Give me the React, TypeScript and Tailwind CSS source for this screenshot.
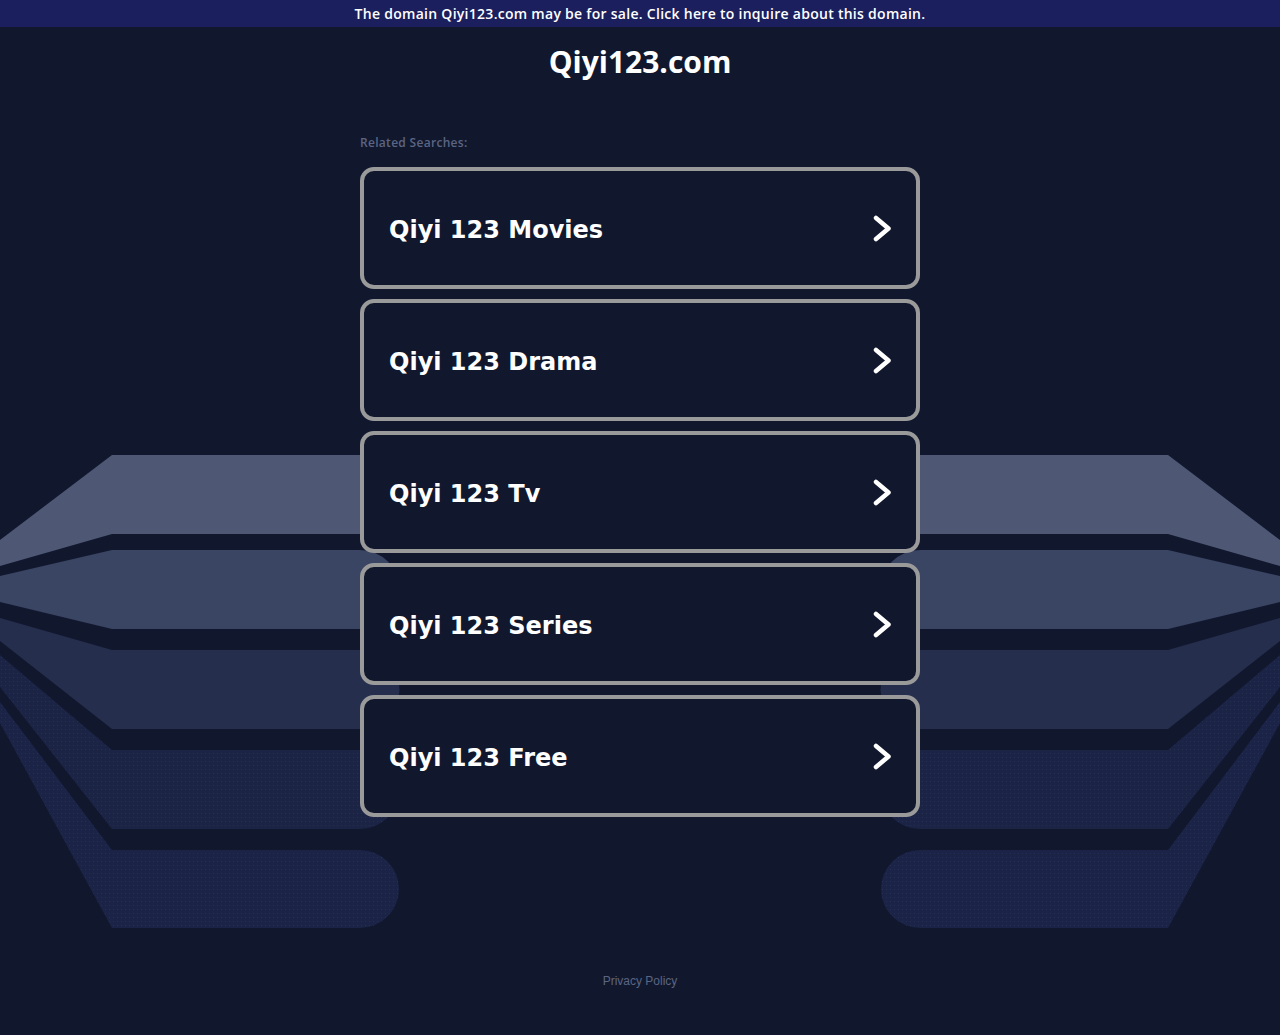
import React from 'react'

const searches = ['Qiyi 123 Movies', 'Qiyi 123 Drama', 'Qiyi 123 Tv', 'Qiyi 123 Series', 'Qiyi 123 Free']

// left-side bands of the backdrop; the right side is a mirror copy
const bands = [
  { tl: 540, bl: 566, top: 455, bot: 534, fill: '#4e5875' },
  { tl: 576, bl: 602, top: 550, bot: 629, fill: '#3a4463' },
  { tl: 618, bl: 641, top: 650, bot: 729, fill: '#252e4d' },
  { tl: 655, bl: 687, top: 750, bot: 829, fill: '#1c2446', dots: true },
  { tl: 702, bl: 723, top: 850, bot: 928, fill: '#1b2446', dots: true },
]

const bandPath = (b: (typeof bands)[number]) => {
  const r = (b.bot - b.top) / 2
  return `M0,${b.tl} L112,${b.top} L360,${b.top} A${r},${r} 0 0 1 360,${b.bot} L112,${b.bot} L0,${b.bl} Z`
}

const Backdrop: React.FC = () => {
  const shapes = bands.map((b, i) => (
    <g key={i}>
      <path d={bandPath(b)} fill={b.fill} />
      {b.dots && <path d={bandPath(b)} fill="url(#dots)" />}
    </g>
  ))
  return (
    <svg className="absolute left-0 top-0 w-full h-[1035px]" viewBox="0 0 1280 1035" aria-hidden="true">
      <defs>
        <pattern id="dots" width="4" height="4" patternUnits="userSpaceOnUse">
          <rect x="1" y="1" width="1" height="1" fill="#2a3560" opacity="0.6" />
        </pattern>
      </defs>
      {shapes}
      <g transform="translate(1280,0) scale(-1,1)">{shapes}</g>
    </svg>
  )
}

const Chevron: React.FC = () => (
  <svg width="18" height="27" viewBox="0 0 18 27" fill="none">
    <path d="M3 3 L15.5 13.5 L3 24" stroke="white" strokeWidth="4.5" strokeLinecap="round" strokeLinejoin="round" />
  </svg>
)

const App: React.FC = () => {
  return (
    <div className="relative min-h-[1035px] bg-[#11182e] overflow-hidden">
      <Backdrop />

      <div className="relative">
        {/* Sale banner */}
        <a
          href="#"
          className="block h-[27px] bg-[#1b1f5e] text-center text-white text-[14px] font-semibold leading-[28px] tracking-[0.28px] font-['Open_Sans',sans-serif]"
        >
          The domain Qiyi123.com may be for sale. Click here to inquire about this domain.
        </a>

        <h1 className="mt-[17px] text-center text-white text-[30px] font-bold leading-[36px] font-['Open_Sans',sans-serif]">
          Qiyi123.com
        </h1>

        <div className="mx-auto w-[560px] mt-[55px]">
          <p className="text-[12px] leading-[16px] font-semibold tracking-[0.3px] text-[#5b6583] font-['Open_Sans',sans-serif]">
            Related Searches:
          </p>

          <div className="mt-[16px] flex flex-col gap-[10px]">
            {searches.map((s) => (
              <a
                key={s}
                href="#"
                className="flex h-[122px] items-center justify-between rounded-[14px] border-4 border-[#9a9a9a] bg-[#11182e] px-[25px]"
              >
                <span className="pt-[4px] text-white text-[24px] font-bold font-['DejaVu_Sans',Verdana,sans-serif]">{s}</span>
                <Chevron />
              </a>
            ))}
          </div>
        </div>

        <footer className="mt-[150px] text-center">
          <a href="#" className="text-[12px] leading-[16px] text-[#5b6583] font-['Liberation_Sans',Arial,sans-serif]">
            Privacy Policy
          </a>
        </footer>
      </div>
    </div>
  )
}

export default App
